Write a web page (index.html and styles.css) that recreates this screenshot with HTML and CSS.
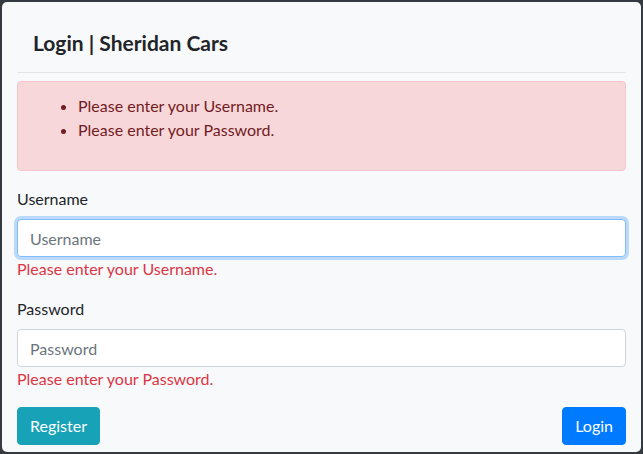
FILE: index.html
```html
<!DOCTYPE html>
<html lang="en">
<head>
<meta charset="utf-8">
<title>Login | Sheridan Cars</title>
<link rel="stylesheet" href="styles.css">
</head>
<body>
<div class="card">
  <div class="card-body">
    <div class="card-header">
      <h4 class="title">Login | Sheridan Cars</h4>
    </div>
    <div class="alert">
      <ul class="alert-list">
        <li>Please enter your Username.</li>
        <li>Please enter your Password.</li>
      </ul>
    </div>
    <form class="form">
      <div class="form-group">
        <label class="label" for="username">Username</label>
        <input class="input input-focus" id="username" type="text" placeholder="Username">
        <div class="invalid">Please enter your Username.</div>
      </div>
      <div class="form-group">
        <label class="label" for="password">Password</label>
        <input class="input" id="password" type="password" placeholder="Password">
        <div class="invalid">Please enter your Password.</div>
      </div>
      <div class="actions">
        <button type="button" class="btn btn-info">Register</button>
        <button type="button" class="btn btn-primary">Login</button>
      </div>
    </form>
  </div>
</div>
</body>
</html>
```
FILE: styles.css
```css
* { box-sizing: border-box; }
html, body { height: 100%; }
body {
  margin: 0;
  padding: 2px;
  background: #343a40;
  font-family: "Lato", "Segoe UI", sans-serif;
  font-size: 16px;
  line-height: 1.5;
  color: #212529;
}
.card {
  height: 450px;
  background: #f8f9fa;
  border-radius: 5px;
  overflow: hidden;
}
.card-body { padding: 15px; }
.card-header {
  padding: 14px 16px 18px;
  border-bottom: 1px solid #e3e5e8;
}
.title {
  margin: 0;
  font-size: 21px;
  font-weight: 700;
  line-height: 23px;
}
.alert {
  margin-top: 8px;
  margin-bottom: 16px;
  padding: 12px 20px;
  background: #f8d7da;
  border: 1px solid #f5c6cb;
  border-radius: 4px;
  color: #721c24;
}
.alert-list {
  margin: 0 0 16px;
  padding-left: 40px;
}
.form-group { margin-bottom: 16px; }
.label {
  display: inline-block;
  margin-bottom: 8px;
}
.input {
  display: block;
  width: 100%;
  height: 38px;
  padding: 6px 12px;
  font: inherit;
  color: #495057;
  background: #fff;
  border: 1px solid #ced4da;
  border-radius: 4px;
  outline: none;
}
.input::placeholder { color: #6c757d; }
.input-focus {
  border-color: #80bdff;
  box-shadow: 0 0 0 3px rgba(0, 123, 255, .25);
}
.invalid { color: #dc3545; }
.actions {
  display: flex;
  justify-content: space-between;
}
.btn {
  height: 38px;
  padding: 6px 12px;
  font: inherit;
  color: #fff;
  border: 1px solid transparent;
  border-radius: 4px;
}
.btn-info { background: #17a2b8; border-color: #17a2b8; }
.btn-primary { background: #007bff; border-color: #007bff; }
```
